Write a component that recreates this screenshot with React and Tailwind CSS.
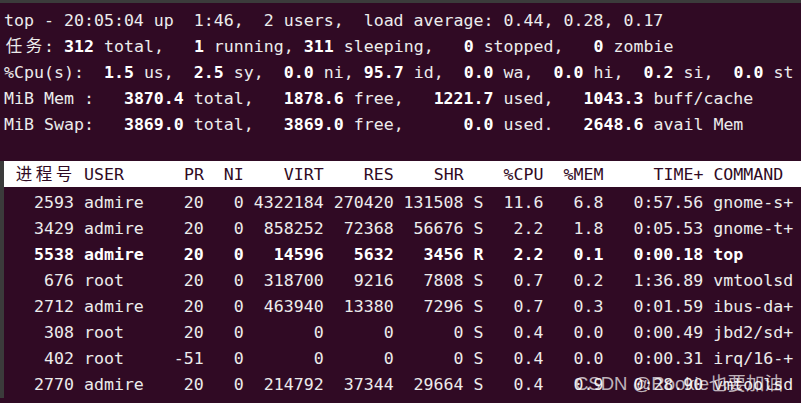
import React from 'react';

const rows = [
  ['2593', 'admire', '20', '0', '4322184', '270420', '131508', 'S', '11.6', '6.8', '0:57.56', 'gnome-s+'],
  ['3429', 'admire', '20', '0', '858252', '72368', '56676', 'S', '2.2', '1.8', '0:05.53', 'gnome-t+'],
  ['5538', 'admire', '20', '0', '14596', '5632', '3456', 'R', '2.2', '0.1', '0:00.18', 'top', true],
  ['676', 'root', '20', '0', '318700', '9216', '7808', 'S', '0.7', '0.2', '1:36.89', 'vmtoolsd'],
  ['2712', 'admire', '20', '0', '463940', '13380', '7296', 'S', '0.7', '0.3', '0:01.59', 'ibus-da+'],
  ['308', 'root', '20', '0', '0', '0', '0', 'S', '0.4', '0.0', '0:00.49', 'jbd2/sd+'],
  ['402', 'root', '-51', '0', '0', '0', '0', 'S', '0.4', '0.0', '0:00.31', 'irq/16-+'],
  ['2770', 'admire', '20', '0', '214792', '37344', '29664', 'S', '0.4', '0.9', '0:28.90', 'vmtoolsd'],
];

// same widths as top's default field layout
const fmt = (r) =>
  [
    r[0].padStart(7),
    r[1].padEnd(8),
    r[2].padStart(3),
    r[3].padStart(3),
    r[4].padStart(7),
    r[5].padStart(6),
    r[6].padStart(6),
    r[7],
    r[8].padStart(5),
    r[9].padStart(5),
    r[10].padStart(9),
    r[11],
  ].join(' ');

// PID label is drawn separately (wide glyphs), the S column has no label here
const header = fmt(['', 'USER', 'PR', 'NI', 'VIRT', 'RES', 'SHR', ' ', '%CPU', '%MEM', 'TIME+', 'COMMAND']).slice(7);

// a wide glyph takes two terminal cells
const Wide = ({ children }) => (
  <span className="inline-block w-[20px] text-center leading-none font-['Noto_Sans_CJK_SC',sans-serif] text-[16.5px]">
    {children}
  </span>
);

const B = ({ children }) => <b className="font-bold text-white">{children}</b>;

const Line = ({ children }) => <div className="h-[26px] leading-[26px] whitespace-pre">{children}</div>;

export default function App() {
  return (
    <div className="relative w-[801px] h-[403px] overflow-hidden bg-[#300a24] text-[#ececec] font-['DejaVu_Sans_Mono',monospace] text-[16.6px]">
      <div className="h-[3px] bg-[#3b3b3b]" />
      <div className="pt-[5px] pl-[4px]">
        <Line>top - 20:05:04 up  1:46,  2 users,  load average: 0.44, 0.28, 0.17</Line>
        <Line>
          <Wide>任</Wide>
          <Wide>务</Wide>: <B>312</B> total,   <B>1</B> running, <B>311</B> sleeping,   <B>0</B> stopped,   <B>0</B> zombie
        </Line>
        <Line>
          %Cpu(s):  <B>1.5</B> us,  <B>2.5</B> sy,  <B>0.0</B> ni, <B>95.7</B> id,  <B>0.0</B> wa,  <B>0.0</B> hi,  <B>0.2</B> si,  <B>0.0</B> st
        </Line>
        <Line>
          MiB Mem :   <B>3870.4</B> total,   <B>1878.6</B> free,   <B>1221.7</B> used,   <B>1043.3</B> buff/cache
        </Line>
        <Line>
          MiB Swap:   <B>3869.0</B> total,   <B>3869.0</B> free,      <B>0.0</B> used.   <B>2648.6</B> avail Mem
        </Line>
        <div className="h-[23px]" />
      </div>
      <div className="flex">
        <div className="w-[4px] bg-[#3b3b3b]" />
        <div className="flex-1">
          <div className="h-[26px] pt-[2px] leading-[24px] whitespace-pre bg-white text-[#300a24]">
            {' '}
            <Wide>进</Wide>
            <Wide>程</Wide>
            <Wide>号</Wide>
            {header}
          </div>
          <div className="pt-[3px]">
            {rows.map((r) => (
              <Line key={r[0]}>{r[12] ? <B>{fmt(r)}</B> : fmt(r)}</Line>
            ))}
          </div>
        </div>
      </div>
      <div className="absolute left-[575px] top-[371px] text-[18.5px] leading-[26px] text-white/70 font-['Liberation_Sans','Noto_Sans_CJK_SC',sans-serif]">
        CSDN @Rookie也要加油
      </div>
    </div>
  );
}
